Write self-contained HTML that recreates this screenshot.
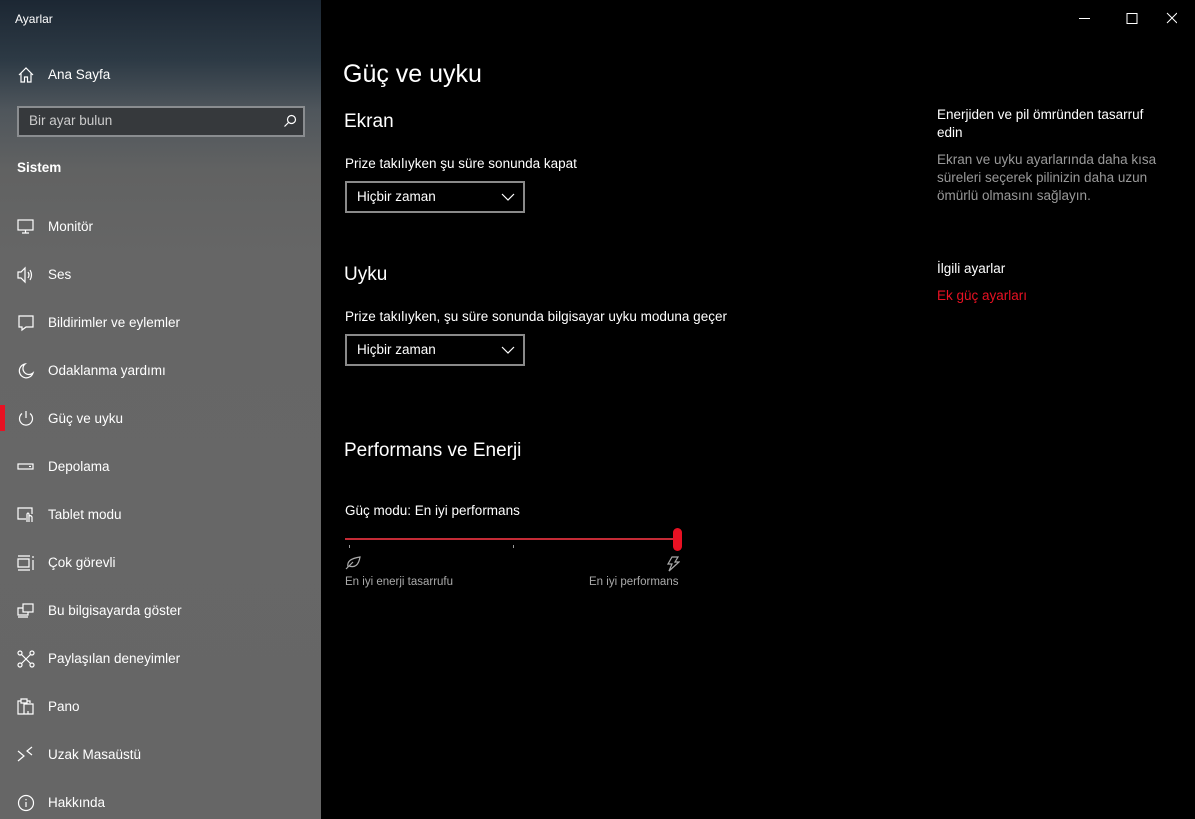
<!DOCTYPE html>
<html><head><meta charset="utf-8"><style>
*{margin:0;padding:0;box-sizing:border-box}
body{width:1195px;height:819px;overflow:hidden;background:#000;font-family:"Liberation Sans",sans-serif;color:#fff;position:relative}
#side{position:absolute;left:0;top:0;width:321px;height:819px;background:linear-gradient(180deg,#1c2733 0px,#2d3a45 60px,#4f565c 110px,#616262 170px,#666 260px,#676767 500px,#666 819px)}
.t{position:absolute;white-space:nowrap}
.nav{position:absolute;left:48px;font-size:13.5px;color:#fff}
.ic{position:absolute;left:17px;width:18px;height:18px}
svg{fill:none;stroke:#fff;stroke-width:1.2}
.dd{position:absolute;left:345px;width:180px;height:32px;border:2px solid #8a8a8a;font-size:13.5px;padding:6px 10px}
.dd svg{position:absolute;right:8px;top:9px}
</style></head><body>
<div id="side">
<div class="t" style="left:15px;top:12px;font-size:12px">Ayarlar</div>
<svg class="ic" style="top:66px" viewBox="0 0 18 18"><path d="M2 9 L9 2 L16 9 M4 7 V16 H7.5 V11 H10.5 V16 H14 V7"/></svg>
<div class="nav" style="top:67px">Ana Sayfa</div>
<div style="position:absolute;left:17px;top:106px;width:288px;height:31px;border:2px solid #8a8d90;background:#36393c"></div>
<div class="t" style="left:29px;top:113px;font-size:13.5px;color:#ccc">Bir ayar bulun</div>
<svg style="position:absolute;left:283px;top:114px" width="14" height="14" viewBox="0 0 14 14"><circle cx="8.5" cy="5.5" r="4"/><path d="M5.5 8.5 L1.5 12.5"/></svg>
<div class="t" style="left:17px;top:160px;font-size:13.5px;font-weight:bold">Sistem</div>
<div style="position:absolute;left:0;top:405px;width:5px;height:26px;background:#e81123"></div>
<svg class="ic" style="top:218px" viewBox="0 0 18 18"><rect x="1" y="2" width="15" height="10"/><path d="M8.5 12 V15 M5 15 H12"/></svg>
<div class="nav" style="top:219px">Monitör</div>
<svg class="ic" style="top:266px" viewBox="0 0 18 18"><path d="M1 6 H4 L8 2 V16 L4 12 H1 Z M11 6 Q13 9 11 12 M13 4 Q16 9 13 14"/></svg>
<div class="nav" style="top:267px">Ses</div>
<svg class="ic" style="top:314px" viewBox="0 0 18 18"><path d="M2 2 H16 V13 H9 L5 16 V13 H2 Z"/></svg>
<div class="nav" style="top:315px">Bildirimler ve eylemler</div>
<svg class="ic" style="top:362px" viewBox="0 0 18 18"><path d="M8 2 A7 7 0 1 0 16 11 A6 6 0 0 1 8 2 Z"/></svg>
<div class="nav" style="top:363px">Odaklanma yardımı</div>
<svg class="ic" style="top:410px" viewBox="0 0 18 18"><path d="M9 1 V8 M5 3.5 A6.5 6.5 0 1 0 13 3.5"/></svg>
<div class="nav" style="top:411px">Güç ve uyku</div>
<svg class="ic" style="top:458px" viewBox="0 0 18 18"><rect x="1" y="6" width="15" height="5"/><path d="M12 8.5 H14"/></svg>
<div class="nav" style="top:459px">Depolama</div>
<svg class="ic" style="top:506px" viewBox="0 0 18 18"><path d="M9 13 H1 V2 H15 V8 M10 16 V8 Q11 6 12 8 V16 M12 10 Q14 9 15 11 V16"/></svg>
<div class="nav" style="top:507px">Tablet modu</div>
<svg class="ic" style="top:554px" viewBox="0 0 18 18"><path d="M1 2 H13 M1 16 H13 M1 5 V13 H12 V5 Z M16 2 V4 M16 6 V16"/></svg>
<div class="nav" style="top:555px">Çok görevli</div>
<svg class="ic" style="top:602px" viewBox="0 0 18 18"><rect x="6" y="2" width="10" height="8"/><path d="M6 6 H1 V13 H11 V10 M1 15 H11"/></svg>
<div class="nav" style="top:603px">Bu bilgisayarda göster</div>
<svg class="ic" style="top:650px" viewBox="0 0 18 18"><circle cx="3" cy="3" r="2"/><circle cx="15" cy="3" r="2"/><circle cx="3" cy="15" r="2"/><circle cx="15" cy="15" r="2"/><path d="M4.5 4.5 L13.5 13.5 M13.5 4.5 L4.5 13.5"/></svg>
<div class="nav" style="top:651px">Paylaşılan deneyimler</div>
<svg class="ic" style="top:698px" viewBox="0 0 18 18"><path d="M4 3 H1 V16 H11 V13 M4 3 V1 H10 V3 M4 3 V5 H10 V3 H13 V5 M7 6 H16 V16 H7 Z"/></svg>
<div class="nav" style="top:699px">Pano</div>
<svg class="ic" style="top:746px" viewBox="0 0 18 18"><path d="M1 5 L7 10 L1 15 M15 1 L10 5 L15 9"/></svg>
<div class="nav" style="top:747px">Uzak Masaüstü</div>
<svg class="ic" style="top:794px" viewBox="0 0 18 18"><circle cx="9" cy="9" r="7.5"/><path d="M9 8 V13 M9 5 V6.2"/></svg>
<div class="nav" style="top:795px">Hakkında</div>
</div>

<svg style="position:absolute;left:1077px;top:11px" width="100" height="14" viewBox="0 0 100 14"><path d="M2 7.5 H13 M50 2.5 H60 V12.5 H50 Z M90 2 L100 12 M100 2 L90 12" stroke-width="1"/></svg>

<div class="t" style="left:343px;top:60px;font-size:25px">Güç ve uyku</div>
<div class="t" style="left:344px;top:111px;font-size:19px">Ekran</div>
<div class="t" style="left:345px;top:156px;font-size:13.5px">Prize takılıyken şu süre sonunda kapat</div>
<div class="dd" style="top:181px">Hiçbir zaman<svg width="14" height="10" viewBox="0 0 14 10"><path d="M1 2 L7 8 L13 2"/></svg></div>
<div class="t" style="left:344px;top:264px;font-size:19px">Uyku</div>
<div class="t" style="left:345px;top:309px;font-size:13.5px">Prize takılıyken, şu süre sonunda bilgisayar uyku moduna geçer</div>
<div class="dd" style="top:334px">Hiçbir zaman<svg width="14" height="10" viewBox="0 0 14 10"><path d="M1 2 L7 8 L13 2"/></svg></div>
<div class="t" style="left:344px;top:440px;font-size:19px">Performans ve Enerji</div>
<div class="t" style="left:345px;top:503px;font-size:13.5px">Güç modu: En iyi performans</div>
<div style="position:absolute;left:345px;top:538px;width:333px;height:2px;background:#c42b36"></div>
<div style="position:absolute;left:673px;top:528px;width:9px;height:23px;border-radius:5px;background:#e81123"></div>
<div style="position:absolute;left:349px;top:545px;width:1px;height:3px;background:#999"></div>
<div style="position:absolute;left:513px;top:545px;width:1px;height:3px;background:#999"></div>
<svg style="position:absolute;left:345px;top:556px;stroke:#aaa" width="16" height="14" viewBox="0 0 16 14"><path d="M1 13 L8 6 M3 11 Q1 3 15 1 Q13 13 4 10"/></svg>
<svg style="position:absolute;left:666px;top:556px;stroke:#aaa" width="14" height="16" viewBox="0 0 14 16"><path d="M6 1 H12 L9 6 H13 L3 15 L6 8 H2 Z"/></svg>
<div class="t" style="left:345px;top:576px;font-size:11.5px;color:#aaa">En iyi enerji tasarrufu</div>
<div class="t" style="left:589px;top:576px;font-size:11.5px;color:#aaa">En iyi performans</div>

<div class="t" style="left:937px;top:106px;font-size:13.5px;line-height:18px;white-space:normal;width:230px">Enerjiden ve pil ömründen tasarruf edin</div>
<div class="t" style="left:937px;top:151px;font-size:13.5px;line-height:18px;white-space:normal;width:235px;color:#999">Ekran ve uyku ayarlarında daha kısa süreleri seçerek pilinizin daha uzun ömürlü olmasını sağlayın.</div>
<div class="t" style="left:937px;top:261px;font-size:13.5px">İlgili ayarlar</div>
<div class="t" style="left:937px;top:288px;font-size:13.5px;color:#e81123">Ek güç ayarları</div>
</body></html>
